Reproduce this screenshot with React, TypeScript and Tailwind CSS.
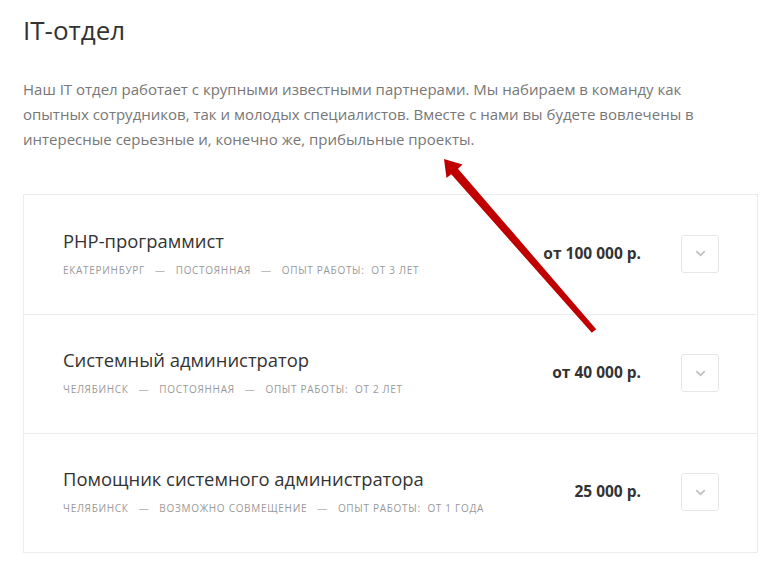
import React from "react";

const jobs = [
  {
    title: "PHP-программист",
    meta: ["Екатеринбург", "Постоянная", "Опыт работы:  от 3 лет"],
    price: "от 100 000 р.",
  },
  {
    title: "Системный администратор",
    meta: ["Челябинск", "Постоянная", "Опыт работы:  от 2 лет"],
    price: "от 40 000 р.",
  },
  {
    title: "Помощник системного администратора",
    meta: ["Челябинск", "Возможно совмещение", "Опыт работы:  от 1 года"],
    price: "25 000 р.",
  },
];

function Chevron() {
  return (
    <svg width="11" height="7" viewBox="0 0 11 7" fill="none">
      <path d="M1.2 1.2 L5.5 5.2 L9.8 1.2" stroke="#c2c2c2" strokeWidth="1.8" />
    </svg>
  );
}

export default function App() {
  return (
    <div
      className="relative w-[769px] h-[561px] overflow-hidden bg-white"
      style={{ fontFamily: '"Open Sans", "Noto Sans", sans-serif' }}
    >
      <div className="pl-[23px] pr-[11px] pt-[13px]">
        <h1 className="text-[26px] leading-[34px] text-[#333333] font-normal">IT-отдел</h1>
        <p className="mt-[30px] text-[15px] leading-[25px] text-[#777777] pr-[40px]">
          Наш IT отдел работает с крупными известными партнерами. Мы набираем в команду как
          опытных сотрудников, так и молодых специалистов. Вместе с нами вы будете вовлечены в
          интересные серьезные и, конечно же, прибыльные проекты.
        </p>
        <div className="mt-[42px] border border-[#ececec]">
          {jobs.map((j, i) => (
            <div
              key={i}
              className={`h-[119px] flex items-center pl-[39px] pr-[38px] pb-[2px] ${
                i > 0 ? "border-t border-[#ececec]" : ""
              }`}
            >
              <div className="flex-1 pb-[2px]">
                <div className="text-[18.4px] leading-[24px] text-[#333333]">{j.title}</div>
                <div className="mt-[10px] flex items-center text-[10px] leading-[14px] uppercase tracking-[0.7px] text-[#999999]">
                  {j.meta.map((m, k) => (
                    <React.Fragment key={k}>
                      {k > 0 && <span className="mx-[10px] text-[#bbbbbb]">—</span>}
                      <span className="whitespace-pre">{m}</span>
                    </React.Fragment>
                  ))}
                </div>
              </div>
              <div className="text-[15.5px] font-bold text-[#333333] mr-[40px]">{j.price}</div>
              <div className="w-[38px] h-[38px] border border-[#e6e6e6] rounded-[3px] flex items-center justify-center">
                <Chevron />
              </div>
            </div>
          ))}
        </div>
      </div>
      <svg className="absolute left-0 top-0 pointer-events-none" width="769" height="561">
        <polygon
          points="444,159 462.5,164.5 458,168.8 596.2,329.2 591.8,332.8 451.2,174.2 446.5,178"
          fill="#c00000"
        />
      </svg>
    </div>
  );
}
